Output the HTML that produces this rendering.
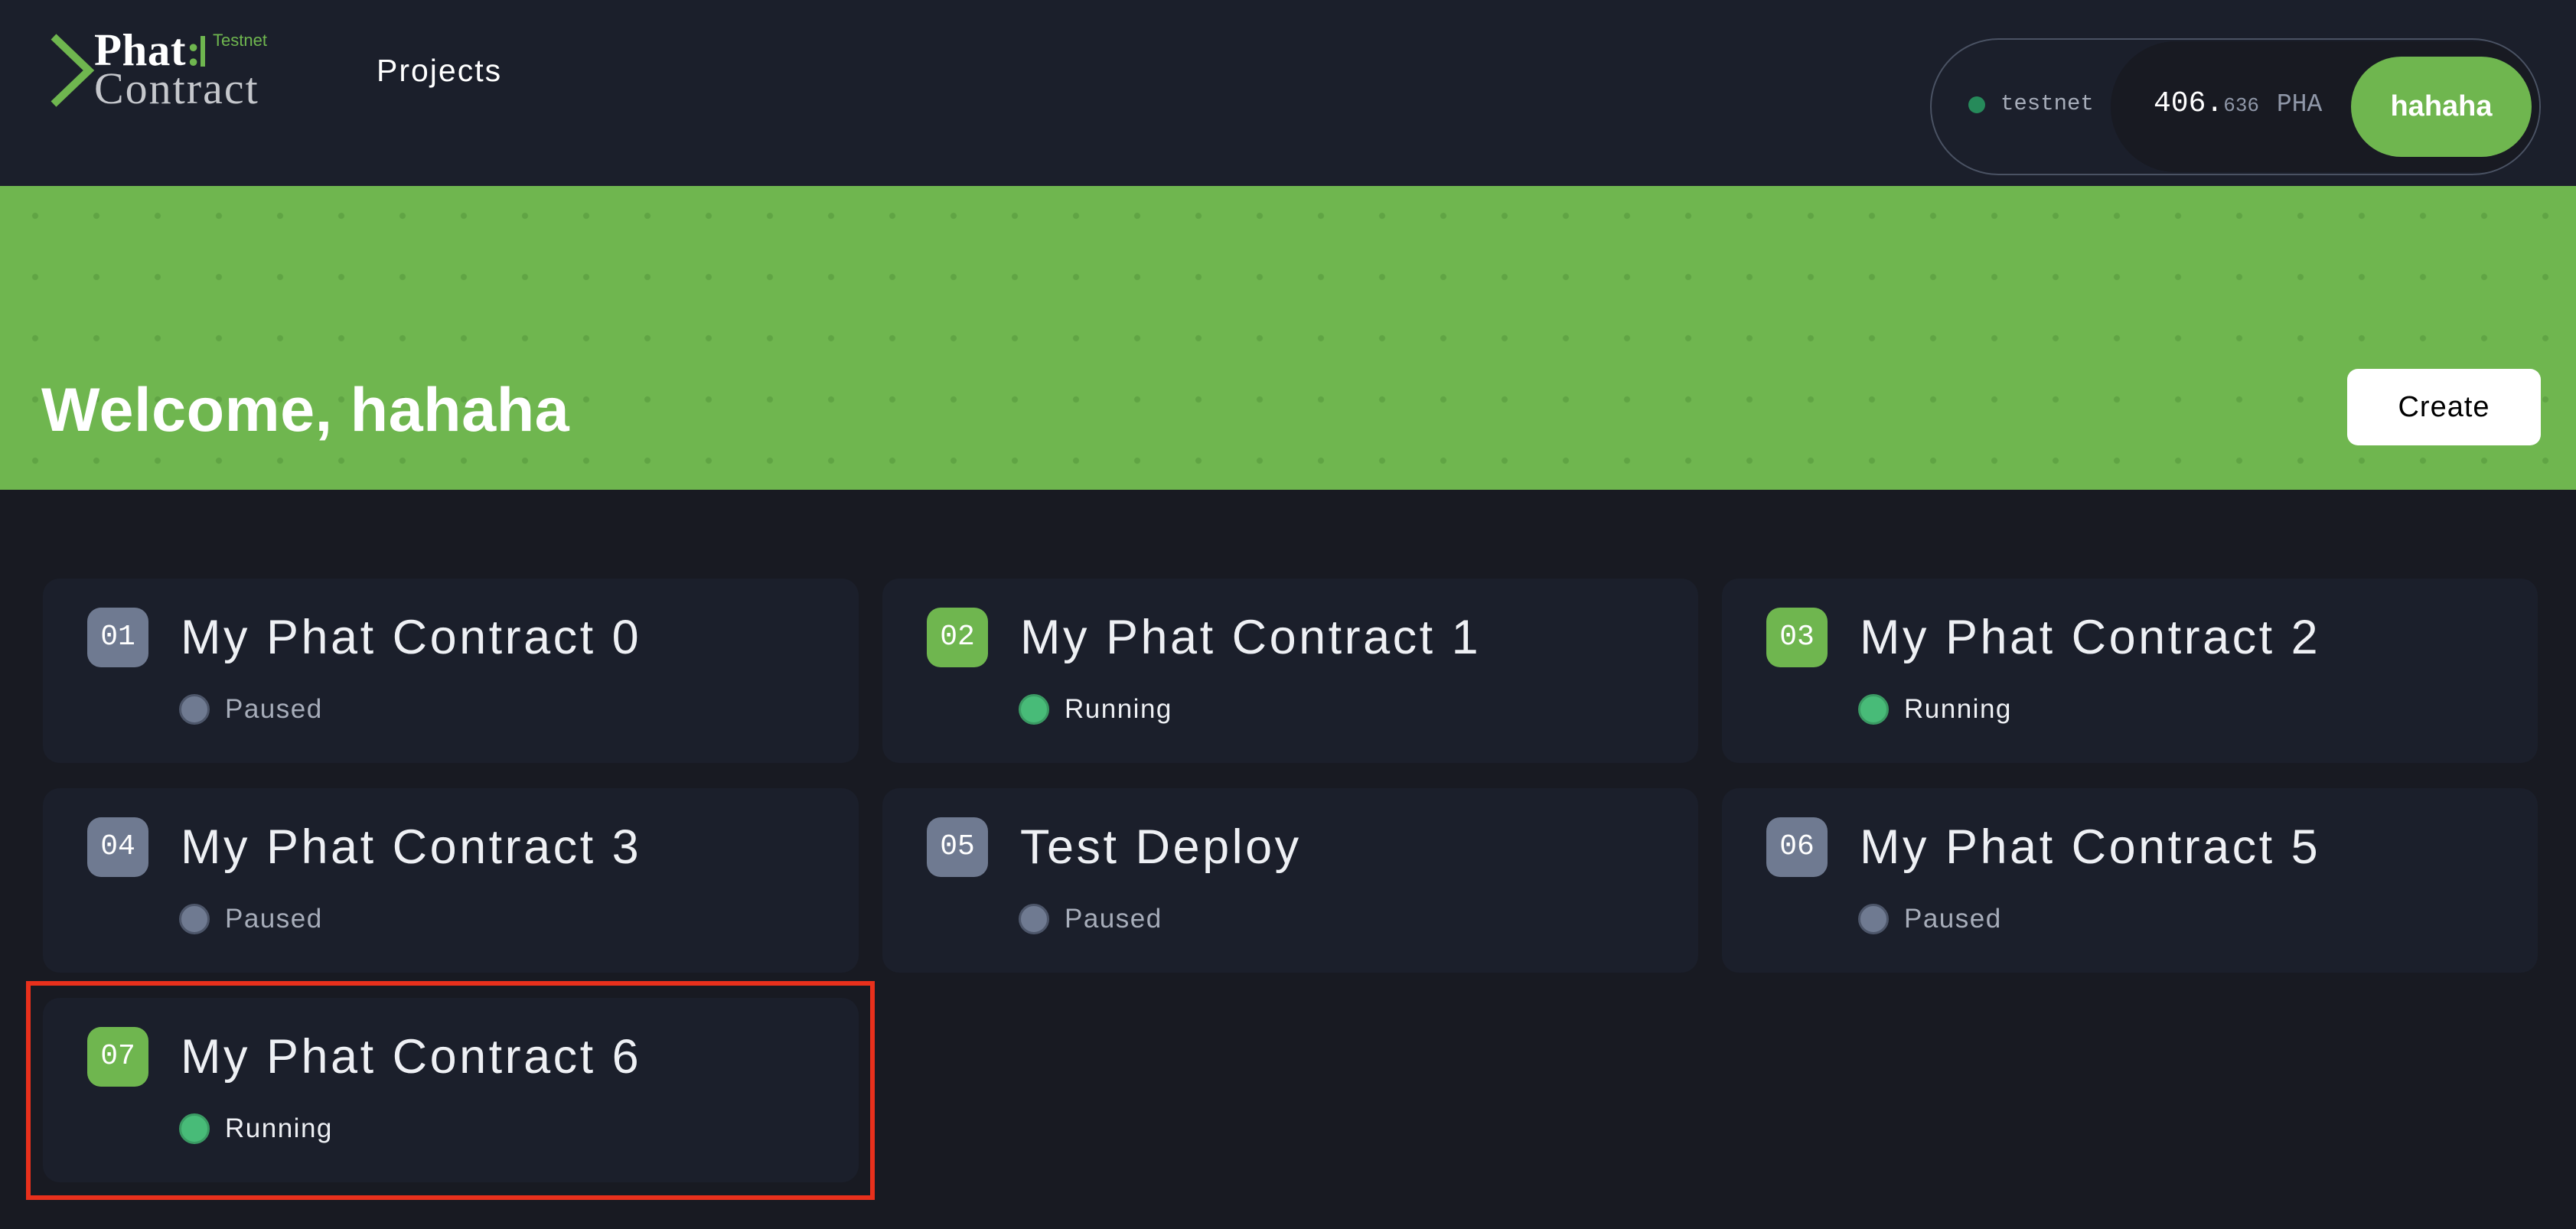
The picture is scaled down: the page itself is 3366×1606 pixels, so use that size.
<!DOCTYPE html>
<html><head><meta charset="utf-8">
<style>
*{margin:0;padding:0;box-sizing:border-box}
html,body{width:3366px;height:1606px;overflow:hidden;background:#181a22;font-family:"Liberation Sans",sans-serif}
.header{position:absolute;left:0;top:0;width:3366px;height:243px;background:#1b1f2b}
.banner{position:absolute;left:0;top:243px;width:3366px;height:397px;background-color:#6fb64f;
background-image:radial-gradient(circle,#60a444 3.5px,transparent 4.5px);background-size:80px 80px;background-position:6px -1px}
.abs{position:absolute}
.card{position:absolute;background:#1b1f2b;border-radius:22px;width:1066px;height:241px}
.badge{position:absolute;left:58px;top:38px;width:80px;height:78px;border-radius:18px;color:#fff;font-family:"Liberation Mono",monospace;font-size:38px;text-align:center;line-height:78px}
.g{background:#6fb64f}.s{background:#6f7a91}
.title{position:absolute;left:180px;top:38px;font-size:63px;color:#eef0f4;font-weight:300;letter-spacing:3.5px;line-height:78px;white-space:nowrap}
.dot{position:absolute;left:178px;top:151px;width:40px;height:40px;border-radius:50%}
.dot.p{background:#6f7a91;border:3px solid #4d566a}
.dot.r{background:#48bb78;border:3px solid #3a9a63}
.st{position:absolute;left:238px;top:148px;font-size:35px;line-height:46px;letter-spacing:1.5px}
.st.p{color:#a7adba}.st.r{color:#eef0f4}
</style></head><body>
<div class="header"></div>
<svg class="abs" style="left:64px;top:44px" width="62" height="96" viewBox="0 0 62 96"><polyline points="6,4 52,48 6,92" fill="none" stroke="#6fb64f" stroke-width="10"/></svg>
<div class="abs" style="left:123px;top:33px;font-family:'Liberation Serif',serif;font-weight:bold;font-size:59px;color:#fff;letter-spacing:0.5px;line-height:64px">Phat<span style="color:#6fb64f">:</span></div>
<div class="abs" style="left:262px;top:47px;width:6px;height:40px;background:#6fb64f"></div>
<div class="abs" style="left:278px;top:40px;font-size:22px;color:#6fb64f;line-height:26px">Testnet</div>
<div class="abs" style="left:123px;top:84px;font-family:'Liberation Serif',serif;font-size:58px;color:#c5c7cc;letter-spacing:2px;line-height:64px">Contract</div>
<div class="abs" style="left:492px;top:66px;font-size:41px;color:#fff;line-height:52px;letter-spacing:2px">Projects</div>
<div class="abs" style="left:2522px;top:50px;width:798px;height:179px;border:2px solid #4a5263;border-radius:90px;overflow:hidden">
 <div class="abs" style="left:234px;top:2px;width:600px;height:171px;background:#181a22;border-radius:85px"></div>
 <div class="abs" style="left:48px;top:74px;width:22px;height:22px;border-radius:50%;background:#268a5a"></div>
 <div class="abs" style="left:90px;top:64px;font-family:'Liberation Mono',monospace;font-size:29px;color:#a7adba;line-height:40px">testnet</div>
 <div class="abs" style="left:290px;top:54px;font-family:'Liberation Mono',monospace;font-size:38px;color:#fff;line-height:60px;white-space:nowrap">406.<span style="font-size:26px;color:#8f97a8">636</span> <span style="font-size:33px;color:#8f97a8">PHA</span></div>
 <div class="abs" style="left:548px;top:22px;width:236px;height:131px;border-radius:66px;background:#6fb64f;color:#fff;font-weight:bold;font-size:38px;text-align:center;line-height:131px">hahaha</div>
</div>
<div class="banner"></div>
<div class="abs" style="left:54px;top:488px;font-size:81px;font-weight:bold;color:#fff;line-height:96px;letter-spacing:0.5px">Welcome, hahaha</div>
<div class="abs" style="left:3067px;top:482px;width:253px;height:100px;background:#fff;border-radius:14px;text-align:center;line-height:100px;font-size:38px;color:#000;letter-spacing:1px">Create</div>

<div class="card" style="left:56px;top:756px"><div class="badge s">01</div><div class="title">My Phat Contract 0</div><div class="dot p"></div><div class="st p">Paused</div></div>
<div class="card" style="left:1153px;top:756px"><div class="badge g">02</div><div class="title">My Phat Contract 1</div><div class="dot r"></div><div class="st r">Running</div></div>
<div class="card" style="left:2250px;top:756px"><div class="badge g">03</div><div class="title">My Phat Contract 2</div><div class="dot r"></div><div class="st r">Running</div></div>
<div class="card" style="left:56px;top:1030px"><div class="badge s">04</div><div class="title">My Phat Contract 3</div><div class="dot p"></div><div class="st p">Paused</div></div>
<div class="card" style="left:1153px;top:1030px"><div class="badge s">05</div><div class="title">Test Deploy</div><div class="dot p"></div><div class="st p">Paused</div></div>
<div class="card" style="left:2250px;top:1030px"><div class="badge s">06</div><div class="title">My Phat Contract 5</div><div class="dot p"></div><div class="st p">Paused</div></div>
<div class="card" style="left:56px;top:1304px"><div class="badge g">07</div><div class="title">My Phat Contract 6</div><div class="dot r"></div><div class="st r">Running</div></div>
<div class="abs" style="left:34px;top:1282px;width:1109px;height:286px;border:6px solid #e8301c"></div>
</body></html>
